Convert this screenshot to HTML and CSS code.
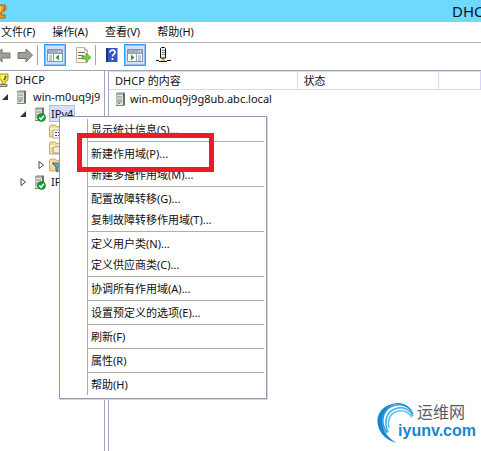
FILE: index.html
```html
<!DOCTYPE html>
<html lang="zh-CN">
<head>
    <meta charset="UTF-8">
    <meta name="viewport" content="width=device-width, initial-scale=1.0">
    <title>DHCP</title>
    <link rel="stylesheet" href="styles.css">
</head>
<body>

    <!-- Shared icons -->
    <svg class="sprite" aria-hidden="true">
        <symbol id="server" viewBox="0 0 16 16">
            <path d="M2 2l2-1h7v13l-1 1H2z" fill="#b9c0b9"/>
            <path d="M3 3h6v12H3z" fill="#dfe5dc"/>
            <path d="M9 2h2v12l-2 1z" fill="#667268"/>
            <path d="M2 3h7M3 6h5M3 9h5M3 11h5M2 14.500h8" stroke="#7d897f"/>
            <path d="M4 12h2v1H4z" fill="#32b338"/>
        </symbol>
        <symbol id="server-ok" viewBox="0 0 16 16">
            <use href="#server" width="16" height="16"/>
            <circle cx="8.500" cy="11.500" r="4" fill="#169b2c" stroke="#0b7a1e" stroke-width=".6"/>
            <path d="M6.300 11.500l1.700 1.800 2.900-3.500" fill="none" stroke="#fff" stroke-width="1.500"/>
        </symbol>
        <symbol id="folder" viewBox="0 0 16 16">
            <path d="M0.500 3.500l1-1.500h5l1 1.500h7v10.500H0.500z" fill="#f3d994" stroke="#d3ac5d"/>
            <path d="M1 6h13" stroke="#fff2c8" stroke-width="2"/>
        </symbol>
        <symbol id="trophy" viewBox="0 0 16 16">
            <path d="M1 2h10v4c0 3-2 4-3 4v2H5V9L1 6z" fill="#f4e028" stroke="#a79a23"/>
            <path d="M4 3h3v4H5z" fill="#fffbc0"/>
            <path d="M9 4l-2 4" stroke="#5d5a30" stroke-width="1.500"/>
            <path d="M2 12.500h8v2H2z" fill="#c9c6a0" stroke="#77755c"/>
        </symbol>
    </svg>

    <header class="titlebar">
        <svg class="app-icon" viewBox="0 0 16 16" aria-hidden="true">
            <path d="M4 2h9l-1 6-3 2v2h4v3H5v-2l2-2-3-3z" fill="#f19a27" stroke="#a45b16"/>
            <path d="M12 3h2v4l-3 1" fill="none" stroke="#c36c17"/>
            <path d="M7 3h2v5H7z" fill="#ffd260"/>
        </svg>
        <h1 class="title">DHCP</h1>
    </header>

    <nav class="menubar">
        <button type="button">文件(F)</button>
        <button type="button">操作(A)</button>
        <button type="button">查看(V)</button>
        <button type="button">帮助(H)</button>
    </nav>

    <div class="toolbar">
        <button type="button" aria-label="后退">
            <svg viewBox="0 0 16 16"><path d="M1 8l6-6v4h8v5H7v4z" fill="#a0a097" stroke="#74746e"/></svg>
        </button>
        <button type="button" aria-label="前进">
            <svg viewBox="0 0 16 16"><path d="M15.500 8L9 2v3.500H1v6h8V15z" fill="#a0a097" stroke="#74746e"/></svg>
        </button>
        <span class="divider"></span>
        <button type="button" class="on" aria-label="控制台树">
            <svg viewBox="0 0 16 16">
                <path d="M.5 2.500h15v12H.5z" fill="#fff" stroke="#8a8fa8"/>
                <path d="M1 3h14v3H1z" fill="#a5a9bb"/>
                <path d="M11 4.500h1M13 4.500h1" stroke="#fff"/>
                <path d="M6.500 6v8M1 6.500h14" stroke="#9a9eb2"/>
                <path d="M2 9h3M2 11h3M2 13h3" stroke="#7c90b8"/>
                <path d="M12 7.500v6L8.500 10.500z" fill="#27a52d"/>
            </svg>
        </button>
        <button type="button" class="spaced" aria-label="导出列表">
            <svg viewBox="0 0 16 16">
                <path d="M1.500.5h8l3 3v12h-11z" fill="#fffbe6" stroke="#bcb497"/>
                <path d="M9.500.5v3h3" fill="none" stroke="#bcb497"/>
                <path d="M3 5.500h7M3 8.500h5M3 11.500h5" stroke="#6d6a8c"/>
                <path d="M7 9h4V6l5 4.500-5 4.500v-3H7z" fill="#75cc35" stroke="#4a9f25" stroke-width=".7"/>
            </svg>
        </button>
        <span class="divider"></span>
        <button type="button" aria-label="帮助">
            <svg viewBox="0 0 16 16">
                <path d="M1 1h11.500v14H1z" fill="#3157c6"/>
                <path d="M1 1h2v14H1z" fill="#1d357f"/>
                <path d="M5 5.500c0-3.500 5.500-3 5 0-.2 1.700-2.500 1.800-2.500 4M7.500 11v2" fill="none" stroke="#fff" stroke-width="1.700"/>
            </svg>
        </button>
        <button type="button" class="on" aria-label="操作窗格">
            <svg viewBox="0 0 16 16">
                <path d="M.5 2.500h15v12H.5z" fill="#fff" stroke="#8a8fa8"/>
                <path d="M1 3h14v3H1z" fill="#a5a9bb"/>
                <path d="M11 4.500h1M13 4.500h1" stroke="#fff"/>
                <path d="M9.500 6v8M1 6.500h14" stroke="#9a9eb2"/>
                <path d="M11 9h3M11 11h3M11 13h3" stroke="#7c90b8"/>
                <path d="M4 7.500v6l3.500-3z" fill="#27a52d"/>
            </svg>
        </button>
        <button type="button" class="spaced" aria-label="添加服务器">
            <svg viewBox="0 0 16 16">
                <path d="M5.500 1.500l1-1h3l1 1v9.500h-5z" fill="#eee" stroke="#111"/>
                <path d="M7 3.500h3M7 5.500h3M7 7.500h3" stroke="#888"/>
                <path d="M8 11v4M1 13.500h3M12 13.500h4M4 14.500h8" stroke="#111"/>
                <path d="M6 12h4v2H6z" fill="#eec527"/>
            </svg>
        </button>
    </div>

    <main class="panes">
        <aside class="tree-pane">
            <ul class="tree">
                <li>
                    <div class="node"><span class="twist"></span><svg><use href="#trophy"/></svg><span class="label">DHCP</span></div>
                    <ul>
                        <li>
                            <div class="node">
                                <span class="twist"><svg viewBox="0 0 8 8"><path d="M7 1v6H1z" fill="#333"/></svg></span>
                                <svg><use href="#server"/></svg><span class="label">win-m0uq9j9</span>
                            </div>
                            <ul>
                                <li>
                                    <div class="node">
                                        <span class="twist"><svg viewBox="0 0 8 8"><path d="M7 1v6H1z" fill="#333"/></svg></span>
                                        <svg><use href="#server-ok"/></svg><span class="label selected">IPv4</span>
                                    </div>
                                    <ul>
                                        <li><div class="node"><span class="twist"></span>
                                            <svg class="folder" viewBox="0 0 16 16"><use href="#folder" width="16" height="16"/><path d="M4 7h9v8H4z" fill="#fff" stroke="#aaa"/><path d="M6 9h2v1H6zM9 9h2v1H9zM6 12h2v1H6zM9 12h2v1H9z" fill="#446"/></svg>
                                        </div></li>
                                        <li><div class="node"><span class="twist"></span>
                                            <svg class="folder" viewBox="0 0 16 16"><use href="#folder" width="16" height="16"/><path d="M4 8l3-2 5 2v5H4z" fill="#eee" stroke="#a89878"/></svg>
                                        </div></li>
                                        <li><div class="node">
                                            <span class="twist"><svg viewBox="0 0 8 8"><path d="M2 0.500v7L6.500 4z" fill="#fff" stroke="#446"/></svg></span>
                                            <svg class="folder" viewBox="0 0 16 16"><use href="#folder" width="16" height="16"/><path d="M3 6h10l-4 4v5l-2-1v-4z" fill="#6ca0c9" stroke="#456b92"/></svg>
                                        </div></li>
                                    </ul>
                                </li>
                                <li>
                                    <div class="node">
                                        <span class="twist"><svg viewBox="0 0 8 8"><path d="M2 0.500v7L6.500 4z" fill="#fff" stroke="#446"/></svg></span>
                                        <svg><use href="#server-ok"/></svg><span class="label">IPv6</span>
                                    </div>
                                </li>
                            </ul>
                        </li>
                    </ul>
                </li>
            </ul>
        </aside>

        <section class="list-pane">
            <table>
                <thead>
                    <tr><th class="name-col">DHCP 的内容</th><th class="state-col">状态</th><th></th></tr>
                </thead>
                <tbody>
                    <tr><td colspan="3"><div class="entry"><svg><use href="#server"/></svg>win-m0uq9j9g8ub.abc.local</div></td></tr>
                </tbody>
            </table>
        </section>
    </main>

    <!-- Context menu for the IPv4 node -->
    <div class="context-menu">
        <div class="items">
            <button type="button">显示统计信息(S)...</button>
            <hr>
            <button type="button">新建作用域(P)...</button>
            <button type="button">新建多播作用域(M)...</button>
            <hr>
            <button type="button">配置故障转移(G)...</button>
            <button type="button">复制故障转移作用域(T)...</button>
            <hr>
            <button type="button">定义用户类(N)...</button>
            <button type="button">定义供应商类(C)...</button>
            <hr>
            <button type="button">协调所有作用域(A)...</button>
            <hr>
            <button type="button">设置预定义的选项(E)...</button>
            <hr>
            <button type="button">刷新(F)</button>
            <hr>
            <button type="button">属性(R)</button>
            <hr>
            <button type="button">帮助(H)</button>
        </div>
        <div class="highlight"></div>
    </div>

    <!-- Watermark -->
    <div class="watermark">
        <svg viewBox="0 0 38 42" aria-hidden="true">
            <path d="M20 41C-4 36-7 5 17 2 3 8-1 30 20 41z" fill="#1686d2"/>
            <path d="M10 31C2 20 6 5 19 3c8-1 14 2 17 9" fill="none" stroke="#2b9ae0" stroke-width="1.500"/>
            <path d="M11 30C6 19 10 8 21 6c7-1 12 2 15 8" fill="none" stroke="#35aeea" stroke-width="1.500"/>
            <path d="M12 26C10 17 14 10 22 9c6-1 10 2 13 6" fill="none" stroke="#5cc0f2" stroke-width="1.500"/>
            <path d="M8 7c8-8 20-7 26 1" fill="none" stroke="#1686d2"/>
        </svg>
        <div class="brand">
            <span class="brand-cn">运维网</span>
            <span class="brand-url">iyunv.com</span>
        </div>
    </div>

</body>
</html>
```

FILE: styles.css
```css
/* General Reset */
* { margin: 0; padding: 0; box-sizing: border-box; }
body { display: flex; flex-direction: column; min-height: 100vh; overflow: hidden; background-color: #fff; color: #111; font-family: "Noto Sans", "Noto Sans CJK SC", sans-serif; font-size: 11px; line-height: 17px; }
button { font: inherit; color: inherit; background: none; border: none; white-space: nowrap; }
ul { list-style: none; }
svg { flex: none; width: 16px; height: 16px; }
.sprite { position: absolute; width: 0; height: 0; }

/* Title bar */
.titlebar { display: flex; justify-content: space-between; align-items: center; height: 22px; overflow: hidden; background-color: #6dd9ff; }
.app-icon { margin-left: -8px; }
.title { flex: none; width: 29px; font-size: 15px; line-height: 22px; font-weight: 400; }

/* Menu bar */
.menubar { display: flex; gap: 17px; height: 21px; padding: 0 0 1px 1px; border-bottom: 1px solid #b8b8ae; }

/* Toolbar */
.toolbar { display: flex; align-items: center; height: 27px; padding-bottom: 4px; margin-left: -8px; }
.toolbar button { display: flex; justify-content: center; align-items: center; width: 22px; height: 22px; }
.toolbar .on { border: 1px solid #3399ff; background-color: #cfe3fa; box-shadow: inset 0 0 0 1px #8cc0fb; }
.toolbar .spaced { margin-left: 6px; }
.divider { width: 1px; height: 20px; margin: 0 6px 0 1px; background-color: #a3a3bd; }

/* Panes */
.panes { flex: 1; display: flex; gap: 3px; border-top: 1px solid #a5a5b8; }
.tree-pane { flex: 0 0 105px; overflow: hidden; border-right: 1px solid #a5a5c0; }
.list-pane { flex: 1; border-left: 1px solid #a5a5c0; }

/* Tree */
.tree { margin-left: -17px; }
.tree ul { padding-left: 18px; }
.node { display: flex; align-items: center; height: 17px; white-space: nowrap; }
.twist { display: flex; flex: none; width: 14px; }
.twist svg { width: 8px; height: 8px; }
.folder { margin-left: -2px; }
.label { padding: 0 2px; }
.selected { background-color: #d2e0fc; outline: 1px solid #a8c2f0; outline-offset: -1px; }

/* Content list */
table { width: 100%; border-collapse: collapse; table-layout: fixed; }
th { height: 18px; padding-left: 6px; text-align: left; font-weight: 400; border: 1px solid #d9d5f7; border-left: none; }
.name-col { width: 188px; }
.state-col { width: 141px; }
.entry { display: flex; align-items: center; height: 17px; padding-left: 5px; }

/* Context menu */
.context-menu { position: absolute; left: 59px; top: 116px; width: 208px; padding: 2px 2px 3px 27px; background-color: #fff; border: 1px solid #9797b3; box-shadow: 1px 1px 0 #d5d5e2; }
.items { border-left: 1px solid #b0b0a0; }
.items button { display: block; width: 100%; height: 21px; padding-left: 3px; text-align: left; }
.items hr { height: 1px; margin: 1px 0; border: none; background-color: #b0b0a0; }
.highlight { position: absolute; left: 17px; top: 16px; width: 137px; height: 39px; border: 5px solid #ed1c24; }

/* Watermark */
.watermark { position: absolute; right: 5px; bottom: 7px; display: flex; }
.watermark > svg { width: 38px; height: 42px; margin-right: -17px; }
.brand { display: flex; flex-direction: column; }
.brand-cn { padding-left: 19px; font-size: 16px; line-height: 20px; color: #555b66; }
.brand-url { font-family: "Liberation Sans", sans-serif; font-size: 16px; font-weight: 700; line-height: 18px; color: #1686d2; }
```
